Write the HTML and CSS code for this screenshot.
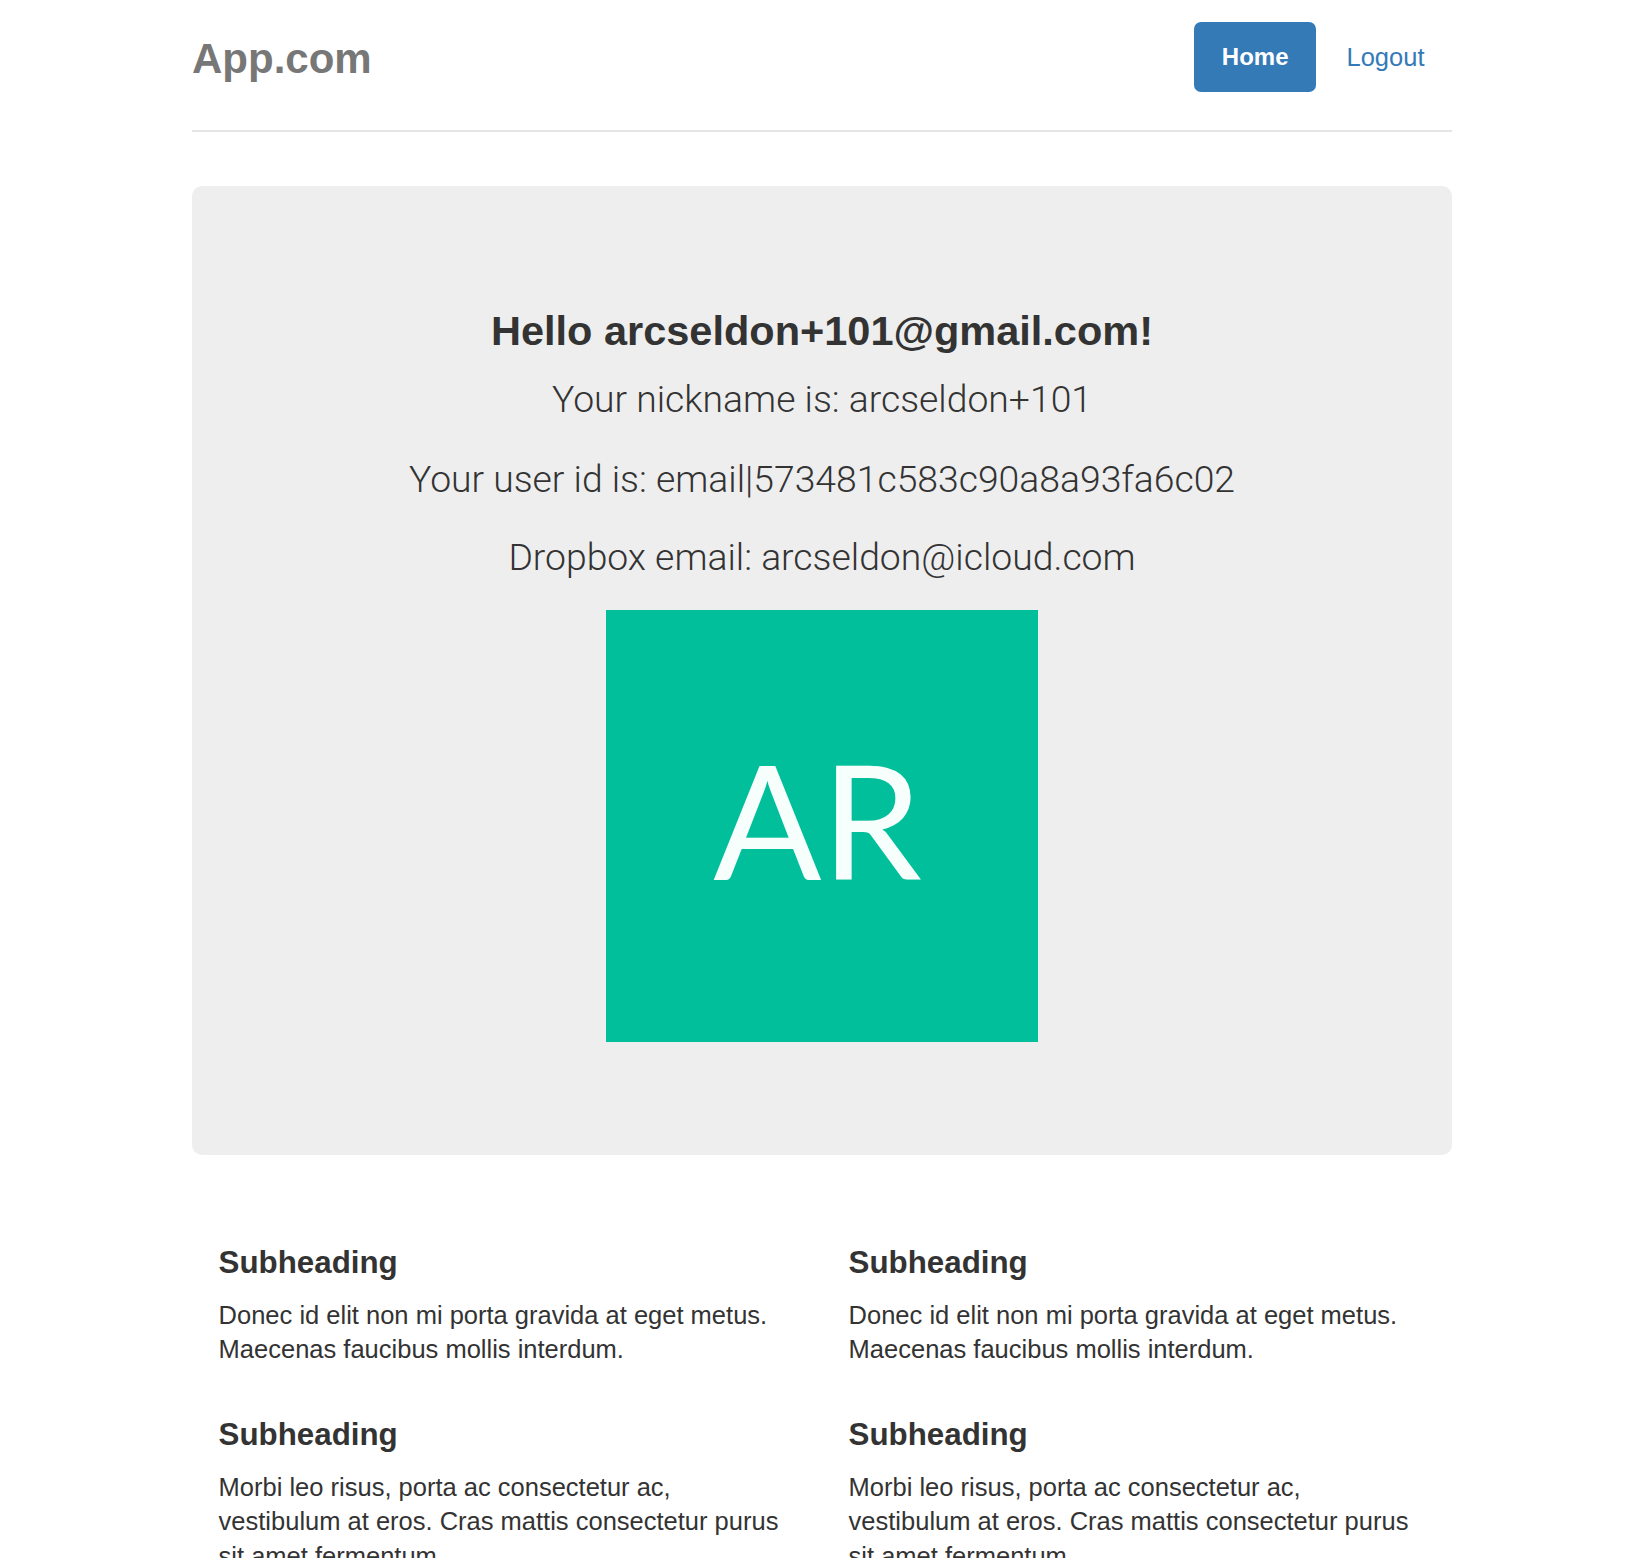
FILE: index.html
```html
<!DOCTYPE html>
<html lang="en">
<head>
<meta charset="utf-8">
<title>App.com</title>
<link rel="stylesheet" href="styles.css">
</head>
<body>
<div class="container">
  <header class="header">
    <h3 class="brand">App.com</h3>
    <nav class="nav">
      <a class="pill active" href="#">Home</a>
      <a class="pill" href="#">Logout</a>
    </nav>
  </header>

  <section class="jumbotron">
    <h3 class="hello">Hello arcseldon+101@gmail.com!</h3>
    <p class="lead">Your nickname is: arcseldon+101</p>
    <p class="lead">Your user id is: email|573481c583c90a8a93fa6c02</p>
    <p class="lead dropbox">Dropbox email: arcseldon@icloud.com</p>
    <div class="avatar"><span class="initials">AR</span></div>
  </section>

  <section class="marketing">
    <div class="col">
      <h4>Subheading</h4>
      <p>Donec id elit non mi porta gravida at eget metus. Maecenas faucibus mollis interdum.</p>
      <h4>Subheading</h4>
      <p>Morbi leo risus, porta ac consectetur ac, vestibulum at eros. Cras mattis consectetur purus sit amet fermentum.</p>
      <h4>Subheading</h4>
      <p>Maecenas sed diam eget risus varius blandit sit amet non magna.</p>
    </div>
    <div class="col">
      <h4>Subheading</h4>
      <p>Donec id elit non mi porta gravida at eget metus. Maecenas faucibus mollis interdum.</p>
      <h4>Subheading</h4>
      <p>Morbi leo risus, porta ac consectetur ac, vestibulum at eros. Cras mattis consectetur purus sit amet fermentum.</p>
      <h4>Subheading</h4>
      <p>Maecenas sed diam eget risus varius blandit sit amet non magna.</p>
    </div>
  </section>
</div>
</body>
</html>
```

FILE: styles.css
```css
html, body {
  margin: 0;
  padding: 0;
  background: #ffffff;
}

body {
  font-family: "Liberation Sans", Arial, Helvetica, sans-serif;
  color: #333333;
}

.container {
  width: 1260px;
  margin-left: 192px;
}

/* Header */
.header {
  display: flex;
  justify-content: space-between;
  align-items: flex-start;
  padding-top: 22px;
  padding-bottom: 34px;
  border-bottom: 2px solid #e5e5e5;
}

.brand {
  margin: 0;
  font-size: 42px;
  line-height: 74px;
  font-weight: bold;
  color: #777777;
}

.nav {
  display: flex;
  gap: 3px;
}

.pill {
  display: block;
  padding: 0 27.5px;
  line-height: 70px;
  font-size: 25.5px;
  border-radius: 7px;
  color: #337ab7;
  text-decoration: none;
}

.pill.active {
  background: #337ab7;
  color: #ffffff;
  font-size: 24px;
  font-weight: bold;
}

/* Jumbotron */
.jumbotron {
  margin-top: 54px;
  padding: 121px 0 113px;
  background: #eeeeee;
  border-radius: 10px;
  text-align: center;
}

.hello {
  margin: 0;
  font-size: 41.5px;
  line-height: 48px;
  font-weight: bold;
  color: #333333;
}

.lead {
  margin: 32px 0 0;
  font-family: Roboto, "Liberation Sans", Arial, sans-serif;
  font-size: 37.3px;
  line-height: 48px;
  font-weight: 300;
  color: #333333;
}

.hello + .lead {
  margin-top: 20px;
}

.lead.dropbox {
  margin-top: 29.5px;
}

.avatar {
  width: 432px;
  height: 432px;
  margin: 29px auto 0;
  background: #00bf9a;
  display: flex;
  align-items: center;
  justify-content: center;
  box-sizing: border-box;
  padding: 0 9px 16px 0;
}

.initials {
  font-family: Lato, "Open Sans", sans-serif;
  font-size: 160px;
  line-height: 1;
  font-weight: 400;
  color: #f7fffd;
}

/* Marketing */
.marketing {
  margin-top: 91px;
  display: grid;
  grid-template-columns: 630px 630px;
}

.col {
  padding: 0 33px 0 26.6px;
}

.col h4 {
  margin: 0 0 18px;
  font-size: 31.3px;
  line-height: 34px;
  font-weight: bold;
  color: #333333;
}

.col p {
  margin: 0 0 17px;
  font-size: 25.5px;
  line-height: 34.3px;
  color: #333333;
}

.col p + h4 {
  margin-top: 52px;
}
```
